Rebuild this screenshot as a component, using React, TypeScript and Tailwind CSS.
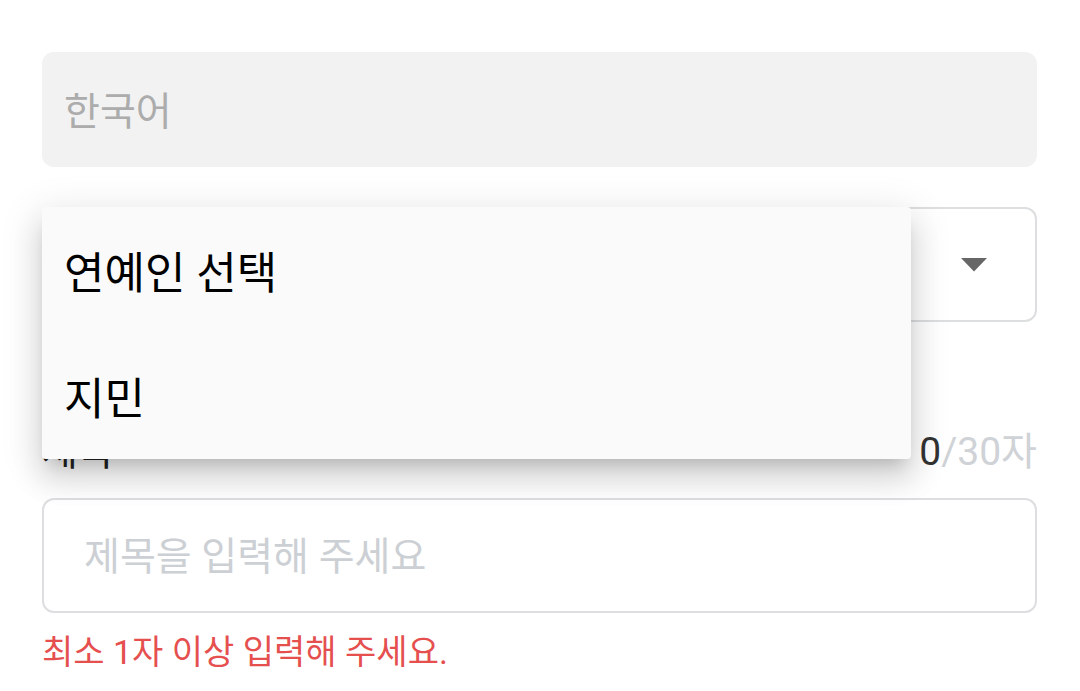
import React from 'react';

const font = { fontFamily: 'Roboto, "Noto Sans CJK KR", sans-serif' };

const options = ['연예인 선택', '지민'];

const CaretDown: React.FC = () => (
  <svg width="26" height="14" viewBox="0 0 26 14" className="text-[#666]">
    <path d="M0 0h26L13 13.5z" fill="currentColor" />
  </svg>
);

export default function App() {
  return (
    <div className="min-h-[691px] w-[1080px] bg-white" style={font}>
      <div className="pl-[42px] pr-[43px] pt-[52px]">
        {/* language (disabled) */}
        <div className="flex h-[115px] items-center rounded-[12px] bg-[#f2f2f2] pl-[22px] pt-[6px] text-[39px] text-[#acacac]">
          한국어
        </div>

        {/* celebrity select + open menu */}
        <div className="relative mt-[40px]">
          <div className="flex h-[115px] items-center justify-end rounded-[12px] border-2 border-[#dddee0] pr-[48px]">
            <CaretDown />
          </div>

          <ul className="absolute left-0 top-0 z-10 w-[869px] rounded-[4px] bg-[#fafafa] shadow-[0_12px_14px_-8px_rgba(0,0,0,0.16),0_20px_28px_3px_rgba(0,0,0,0.1),0_8px_40px_6px_rgba(0,0,0,0.09)]">
            {options.map((o) => (
              <li key={o} className="flex h-[126px] items-center pl-[22px] pt-[8px] text-[44px] text-black">
                {o}
              </li>
            ))}
          </ul>
        </div>

        {/* title label */}
        <div className="mt-[108px] flex h-[40px] items-center justify-between pt-[4px]">
          <span className="text-[39px] text-[#222]">제목</span>
          <span className="text-[39px]">
            <span className="text-[#333]">0</span>
            <span className="text-[#cfd2d6]">/30자</span>
          </span>
        </div>

        <div className="mt-[28px] flex h-[115px] items-center rounded-[12px] border-2 border-[#dddee0] pl-[40px] pt-[4px] text-[39px] text-[#ccd0d4]">
          제목을 입력해 주세요
        </div>

        <p className="mt-[14px] text-[34px] text-[#e5504f]">최소 1자 이상 입력해 주세요.</p>
      </div>
    </div>
  );
}
